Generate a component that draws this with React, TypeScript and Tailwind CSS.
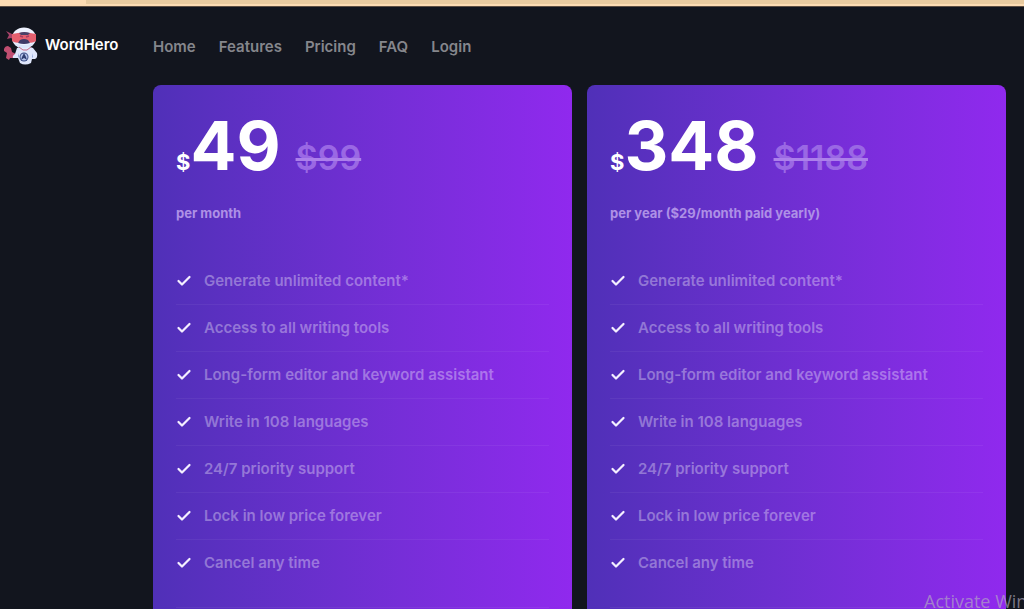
const navLinks = ['Home', 'Features', 'Pricing', 'FAQ', 'Login'];

const features = [
  'Generate unlimited content*',
  'Access to all writing tools',
  'Long-form editor and keyword assistant',
  'Write in 108 languages',
  '24/7 priority support',
  'Lock in low price forever',
  'Cancel any time',
];

interface Plan {
  price: string;
  oldPrice: string;
  period: string;
}

const plans: Plan[] = [
  { price: '49', oldPrice: '$99', period: 'per month' },
  { price: '348', oldPrice: '$1188', period: 'per year ($29/month paid yearly)' },
];

function HeroLogo() {
  return (
    <svg viewBox="0 0 36 40" className="h-10 w-9 shrink-0" aria-hidden="true">
      {/* headband tails */}
      <path d="M11 9 L3 5 L6 9 L4 13 L8 12 L11 14Z" fill="#a8436a" />
      {/* cape */}
      <path
        d="M1 23 Q2 20 5 20 L8 22 L9 26 L13 28 L11 32 L7 32 L6 34 L3 32 L4 27 L1 25Z"
        fill="#c04e70"
      />
      {/* body */}
      <path
        d="M14 22 Q22 18 30 22 L34 27 Q35 32 32 33 L29 33 L28 37 Q22 40 17 37 L15 32 L10 32 Q9 30 12 28Z"
        fill="#dfe6fb"
      />
      <path d="M15 27 L16 30 L15 32Z M29 27 L30 31 L29 32Z" fill="#8fa3d8" />
      {/* head */}
      <ellipse cx="21" cy="12" rx="12" ry="10.5" fill="#eef2ff" />
      <path d="M11 17 Q21 21 31 17 Q28 22 21 22 Q14 22 11 17Z" fill="#dbe5fb" />
      <path d="M9 8 Q21 5 33 8 L33 15 Q29 18 24 16 L18 16 Q13 18 9 15Z" fill="#e5606f" />
      <path d="M16 7 Q21 5 27 7 L25 9 L18 9Z" fill="#4a4168" />
      <path d="M17 14 Q21 12 25 14 L27 17 Q21 19 15 17Z" fill="#3f3a68" />
      <path d="M17 10 L20 11 M23 11 L26 10" stroke="#a83d61" strokeWidth="1.5" />
      {/* chest badge */}
      <path d="M16 21 L20 24 L24 24 L28 21" stroke="#c96b88" strokeWidth="1" fill="none" />
      <circle cx="21" cy="31" r="4.5" fill="#3c4e86" />
      <circle cx="21" cy="31" r="3.5" fill="#b4c3ea" />
      <path d="M21 27 L23 31 L24 34 L21 32 L18 34 L19 31Z" fill="#2e3d70" />
    </svg>
  );
}

function CheckIcon() {
  return (
    <svg viewBox="0 0 16 16" className="h-4 w-4 shrink-0" fill="none" aria-hidden="true">
      <path
        d="M2.5 8 L6 11.5 L13.5 4"
        stroke="#f4efff"
        strokeWidth="2.25"
        strokeLinecap="round"
        strokeLinejoin="round"
      />
    </svg>
  );
}

function PlanCard({ price, oldPrice, period }: Plan) {
  return (
    <section className="rounded-t-lg bg-linear-to-r from-[#5030b8] to-[#9029ee] px-[23px] pt-[23px]">
      <div className="flex items-baseline font-bold text-white">
        <span className="text-[22px] leading-none">$</span>
        <span className="text-[68px] leading-[74px]">{price}</span>
        <del className="ml-[15px] text-[34px] font-semibold leading-none text-[#9a68e4] decoration-[#ac80ea] decoration-3">
          {oldPrice}
        </del>
      </div>
      <p className="mt-[21px] text-[13px] font-bold leading-5 text-[#ae90e6]">{period}</p>
      <ul className="mt-[35px]">
        {features.map((feature) => (
          <li
            key={feature}
            className="flex h-[47px] items-center gap-3 border-b border-white/5 text-[15px] font-semibold text-white/35 last:border-transparent"
          >
            <CheckIcon />
            {feature}
          </li>
        ))}
      </ul>
      <div className="mt-5 h-16 border-t border-white/5" />
    </section>
  );
}

export default function App() {
  return (
    <div className="relative h-screen overflow-hidden bg-[#12151e] font-[Inter,sans-serif]">
      <div className="flex h-[7px] border-b border-[#5c4d42] bg-[#fddcb3] pl-[86px]">
        <div className="h-1 flex-1 bg-[#e9cba0]" />
      </div>
      <header className="flex h-[78px] items-center text-[15px] font-semibold">
        <a href="#" className="flex w-[153px] items-center gap-[6px] pl-[3px] text-white">
          <HeroLogo />
          <span className="pb-0.5">WordHero</span>
        </a>
        <nav className="flex gap-[23px] pt-0.5 text-[#85868c]">
          {navLinks.map((link) => (
            <a key={link} href="#">
              {link}
            </a>
          ))}
        </nav>
      </header>
      <main className="grid grid-cols-2 gap-[15px] pl-[153px] pr-[18px]">
        {plans.map((plan) => (
          <PlanCard key={plan.price} {...plan} />
        ))}
      </main>
      {/* system watermark over the page */}
      <div className="pointer-events-none absolute bottom-0 right-0 w-[100px] overflow-hidden whitespace-nowrap font-['Open_Sans',sans-serif] text-lg leading-4 text-[#b5aebf]/65">
        Activate Windows
      </div>
    </div>
  );
}
